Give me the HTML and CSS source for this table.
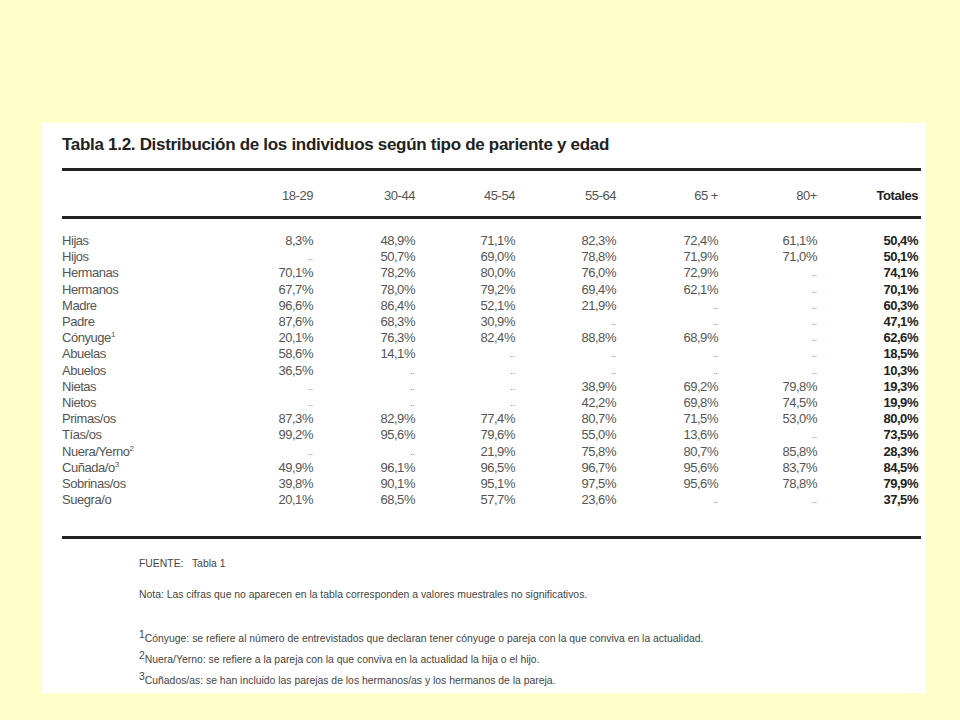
FILE: index.html
```html
<!DOCTYPE html>
<html lang="es">
<head>
<meta charset="utf-8">
<title>Tabla 1.2</title>
<link rel="stylesheet" href="styles.css">
</head>
<body>
<div class="panel">
  <h1 class="title">Tabla 1.2. Distribución de los individuos según tipo de pariente y edad</h1>
  <div class="rule"></div>
  <div class="grid head">
    <span></span><span>18-29</span><span>30-44</span><span>45-54</span><span>55-64</span><span>65 +</span><span>80+</span><span class="tot">Totales</span>
  </div>
  <div class="rule"></div>
  <div class="grid body">
    <span class="lab">Hijas</span><span>8,3%</span><span>48,9%</span><span>71,1%</span><span>82,3%</span><span>72,4%</span><span>61,1%</span><span class="tot">50,4%</span>
    <span class="lab">Hijos</span><span class="ns">..</span><span>50,7%</span><span>69,0%</span><span>78,8%</span><span>71,9%</span><span>71,0%</span><span class="tot">50,1%</span>
    <span class="lab">Hermanas</span><span>70,1%</span><span>78,2%</span><span>80,0%</span><span>76,0%</span><span>72,9%</span><span class="ns">..</span><span class="tot">74,1%</span>
    <span class="lab">Hermanos</span><span>67,7%</span><span>78,0%</span><span>79,2%</span><span>69,4%</span><span>62,1%</span><span class="ns">..</span><span class="tot">70,1%</span>
    <span class="lab">Madre</span><span>96,6%</span><span>86,4%</span><span>52,1%</span><span>21,9%</span><span class="ns">..</span><span class="ns">..</span><span class="tot">60,3%</span>
    <span class="lab">Padre</span><span>87,6%</span><span>68,3%</span><span>30,9%</span><span class="ns">..</span><span class="ns">..</span><span class="ns">..</span><span class="tot">47,1%</span>
    <span class="lab">Cónyuge<sup>1</sup></span><span>20,1%</span><span>76,3%</span><span>82,4%</span><span>88,8%</span><span>68,9%</span><span class="ns">..</span><span class="tot">62,6%</span>
    <span class="lab">Abuelas</span><span>58,6%</span><span>14,1%</span><span class="ns">..</span><span class="ns">..</span><span class="ns">..</span><span class="ns">..</span><span class="tot">18,5%</span>
    <span class="lab">Abuelos</span><span>36,5%</span><span class="ns">..</span><span class="ns">..</span><span class="ns">..</span><span class="ns">..</span><span class="ns">..</span><span class="tot">10,3%</span>
    <span class="lab">Nietas</span><span class="ns">..</span><span class="ns">..</span><span class="ns">..</span><span>38,9%</span><span>69,2%</span><span>79,8%</span><span class="tot">19,3%</span>
    <span class="lab">Nietos</span><span class="ns">..</span><span class="ns">..</span><span class="ns">..</span><span>42,2%</span><span>69,8%</span><span>74,5%</span><span class="tot">19,9%</span>
    <span class="lab">Primas/os</span><span>87,3%</span><span>82,9%</span><span>77,4%</span><span>80,7%</span><span>71,5%</span><span>53,0%</span><span class="tot">80,0%</span>
    <span class="lab">Tías/os</span><span>99,2%</span><span>95,6%</span><span>79,6%</span><span>55,0%</span><span>13,6%</span><span class="ns">..</span><span class="tot">73,5%</span>
    <span class="lab">Nuera/Yerno<sup>2</sup></span><span class="ns">..</span><span class="ns">..</span><span>21,9%</span><span>75,8%</span><span>80,7%</span><span>85,8%</span><span class="tot">28,3%</span>
    <span class="lab">Cuñada/o<sup>3</sup></span><span>49,9%</span><span>96,1%</span><span>96,5%</span><span>96,7%</span><span>95,6%</span><span>83,7%</span><span class="tot">84,5%</span>
    <span class="lab">Sobrinas/os</span><span>39,8%</span><span>90,1%</span><span>95,1%</span><span>97,5%</span><span>95,6%</span><span>78,8%</span><span class="tot">79,9%</span>
    <span class="lab">Suegra/o</span><span>20,1%</span><span>68,5%</span><span>57,7%</span><span>23,6%</span><span class="ns">..</span><span class="ns">..</span><span class="tot">37,5%</span>
  </div>
  <div class="rule"></div>
  <div class="notes">
    <p class="source">FUENTE:&nbsp;&nbsp; Tabla 1</p>
    <p class="nota">Nota: Las cifras que no aparecen en la tabla corresponden a valores muestrales no significativos.</p>
    <p class="fn fn1"><sup>1</sup>Cónyuge: se refiere al número de entrevistados que declaran tener cónyuge o pareja con la que conviva en la actualidad.</p>
    <p class="fn"><sup>2</sup>Nuera/Yerno: se refiere a la pareja con la que conviva en la actualidad la hija o el hijo.</p>
    <p class="fn"><sup>3</sup>Cuñados/as: se han incluido las parejas de los hermanos/as y los hermanos de la pareja.</p>
  </div>
</div>
</body>
</html>
```
FILE: styles.css
```css
html, body {
  margin: 0;
  padding: 0;
  background: #ffffcc;
}
body {
  width: 960px;
  height: 720px;
  overflow: hidden;
}
.panel {
  box-sizing: border-box;
  margin: 123px 0 0 42px;
  width: 883px;
  height: 570px;
  background: #ffffff;
  padding: 0 4px 0 20px;
  font-family: "Liberation Sans", Arial, sans-serif;
  color: #555;
}
.title {
  margin: 0;
  padding-top: 11px;
  height: 45px;
  box-sizing: border-box;
  font-size: 17px;
  line-height: 22px;
  font-weight: bold;
  color: #222;
  letter-spacing: -0.3px;
}
.rule {
  height: 3px;
  background: #222;
}
.grid {
  display: grid;
  grid-template-columns: 151px 100px 102px 100px 101px 102px 99px 101px;
  font-size: 13px;
  letter-spacing: -0.45px;
}
.grid span {
  text-align: right;
}
.grid span.lab {
  text-align: left;
}
.head {
  height: 45px;
  align-items: center;
  line-height: 16px;
  padding-top: 5px;
  box-sizing: border-box;
}
.body {
  padding: 14px 0 28px;
  line-height: 16.2px;
}
.tot {
  font-weight: bold;
  color: #222;
}
.ns {
  font-size: 9px;
  color: #777;
  letter-spacing: 0;
}
.lab sup {
  font-size: 8px;
  line-height: 0;
}
.notes {
  padding-left: 77px;
  font-size: 10.4px;
  color: #444;
}
.notes p {
  margin: 0;
  line-height: 12px;
}
.source {
  padding-top: 19px;
}
.nota {
  padding-top: 19px;
}
.fn {
  padding-top: 9px;
}
.fn1.fn {
  padding-top: 32px;
}
.fn sup {
  font-size: 10.4px;
  line-height: 0;
}
```
